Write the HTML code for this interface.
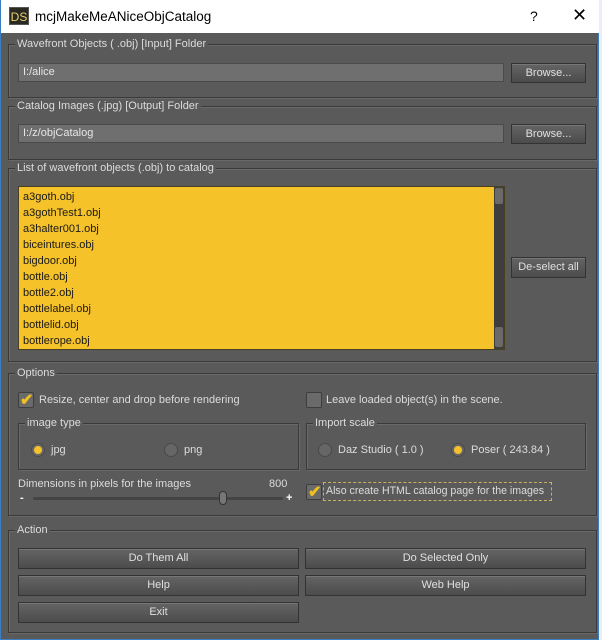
<!DOCTYPE html>
<html><head><meta charset="utf-8"><style>
*{box-sizing:border-box;margin:0;padding:0}
body{width:602px;height:640px;overflow:hidden;background:#e8eef4;font-family:"Liberation Sans",Arial,sans-serif;font-size:11px;color:#dcdcdc;position:relative}
.win{position:absolute;left:0;top:0;width:599px;height:640px;background:#5a5a5a;border:1px solid #3b7fc0;border-top:none}
.title{position:absolute;left:0;top:0;width:598px;height:33px;background:#fff;color:#000;font-size:13.5px}
.a{position:absolute;white-space:nowrap}
.fr{position:absolute;border:1px solid #3a3a3a;box-shadow:inset 1px 1px 0 #6a6a6a,1px 1px 0 #686868}
.lg{position:absolute;background:#5a5a5a;padding:0 2px;top:-7px;left:6px;color:#dcdcdc;white-space:nowrap}
.inp{position:absolute;background:#6f6f6f;border:1px solid #4a4a4a;color:#e6e6e6;padding:2px 4px;height:19px;line-height:13px}
.btn{position:absolute;background:linear-gradient(#646464,#4c4c4c);border:1px solid #333;box-shadow:inset 0 1px 0 #777;color:#e0e0e0;text-align:center;font-size:11px}
.cb{position:absolute;width:16px;height:16px;background:#6a6a6a;border:1px solid #3e3e3e;border-radius:2px}
.rd{position:absolute;width:14px;height:14px;border-radius:50%;background:#666;border:1px solid #4a4a4a}
.rd.on::after{content:"";position:absolute;left:2px;top:2px;width:8px;height:8px;border-radius:50%;background:#f5c22a}
.chk{position:absolute;left:1px;top:-3px;color:#f0c020;font-size:16px;font-weight:bold}
</style></head><body>
<div class="win">
<div class="title">
 <div class="a" style="left:8px;top:7px;width:20px;height:18px;background:#2a2a22;color:#e8d070;font-size:12px;line-height:18px;text-align:center;border:1px solid #555">DS</div>
 <div class="a" style="left:34px;top:9px">mcjMakeMeANiceObjCatalog</div>
 <div class="a" style="left:529px;top:8px;font-size:14px">?</div>
 <div class="a" style="left:571px;top:5px;font-size:18px;font-weight:300">✕</div>
</div>

<div class="fr" style="left:7px;top:44px;width:589px;height:54px"><span class="lg">Wavefront Objects ( .obj) [Input] Folder</span></div>
<div class="inp" style="left:17px;top:63px;width:486px">I:/alice</div>
<div class="btn" style="left:510px;top:63px;width:75px;height:20px;line-height:18px">Browse...</div>

<div class="fr" style="left:7px;top:106px;width:589px;height:54px"><span class="lg">Catalog Images (.jpg) [Output] Folder</span></div>
<div class="inp" style="left:17px;top:124px;width:486px">I:/z/objCatalog</div>
<div class="btn" style="left:510px;top:124px;width:75px;height:20px;line-height:18px">Browse...</div>

<div class="fr" style="left:7px;top:168px;width:589px;height:194px"><span class="lg">List of wavefront objects (.obj) to catalog</span></div>
<div class="a" style="left:17px;top:186px;width:487px;height:164px;background:#f5c22a;border:1px solid #4a4020;color:#1a1a1a;font-size:11px;line-height:16px;padding:2px 4px">
a3goth.obj<br>a3gothTest1.obj<br>a3halter001.obj<br>biceintures.obj<br>bigdoor.obj<br>bottle.obj<br>bottle2.obj<br>bottlelabel.obj<br>bottlelid.obj<br>bottlerope.obj
</div>
<div class="a" style="left:493px;top:187px;width:10px;height:162px;background:#3e3e3e"></div>
<div class="a" style="left:494px;top:188px;width:8px;height:16px;background:#6a6a6a;border-radius:2px"></div>
<div class="a" style="left:494px;top:327px;width:8px;height:20px;background:#6a6a6a;border-radius:2px"></div>
<div class="btn" style="left:510px;top:257px;width:75px;height:21px;line-height:19px">De-select all</div>

<div class="fr" style="left:7px;top:373px;width:589px;height:143px"><span class="lg">Options</span></div>
<div class="cb" style="left:17px;top:392px"><span class="chk">✔</span></div>
<div class="a" style="left:38px;top:394px">Resize, center and drop before rendering</div>
<div class="cb" style="left:305px;top:392px"></div>
<div class="a" style="left:325px;top:394px">Leave loaded object(s) in the scene.</div>

<div class="fr" style="left:17px;top:423px;width:281px;height:47px"><span class="lg" style="left:6px">image type</span></div>
<div class="rd on" style="left:30px;top:443px"></div><div class="a" style="left:50px;top:444px">jpg</div>
<div class="rd" style="left:163px;top:443px"></div><div class="a" style="left:183px;top:444px">png</div>

<div class="fr" style="left:305px;top:423px;width:280px;height:47px"><span class="lg" style="left:6px">Import scale</span></div>
<div class="rd" style="left:317px;top:443px"></div><div class="a" style="left:337px;top:444px">Daz Studio ( 1.0 )</div>
<div class="rd on" style="left:450px;top:443px"></div><div class="a" style="left:470px;top:444px">Poser ( 243.84 )</div>

<div class="a" style="left:17px;top:478px">Dimensions in pixels for the images</div>
<div class="a" style="left:268px;top:478px">800</div>
<div class="a" style="left:19px;top:492px;color:#fff;font-weight:bold">-</div>
<div class="a" style="left:32px;top:497px;width:250px;height:3px;background:#444;border-radius:2px"></div>
<div class="a" style="left:218px;top:491px;width:8px;height:14px;background:#777;border:1px solid #333;border-radius:4px"></div>
<div class="a" style="left:285px;top:492px;color:#fff;font-weight:bold">+</div>

<div class="cb" style="left:305px;top:484px"><span class="chk">✔</span></div>
<div class="a" style="left:322px;top:482px;width:229px;height:19px;border:1px dashed #c8b060;padding:2px 2px;line-height:13px;font-size:10.6px;overflow:hidden">Also create HTML catalog page for the images</div>

<div class="fr" style="left:7px;top:530px;width:589px;height:103px"><span class="lg">Action</span></div>
<div class="btn" style="left:17px;top:548px;width:281px;height:21px;line-height:19px">Do Them All</div>
<div class="btn" style="left:304px;top:548px;width:281px;height:21px;line-height:19px">Do Selected Only</div>
<div class="btn" style="left:17px;top:575px;width:281px;height:21px;line-height:19px">Help</div>
<div class="btn" style="left:304px;top:575px;width:281px;height:21px;line-height:19px">Web Help</div>
<div class="btn" style="left:17px;top:602px;width:281px;height:21px;line-height:19px">Exit</div>
</div>
</body></html>
